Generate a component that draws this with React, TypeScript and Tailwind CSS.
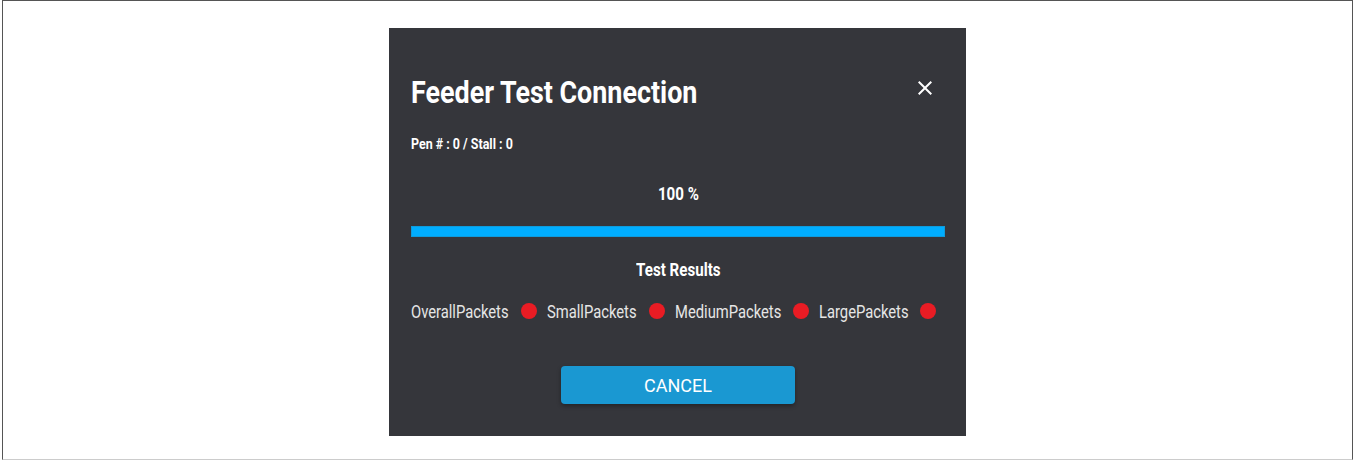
import React from "react";

const font = { fontFamily: "Roboto, 'Noto Sans', sans-serif" };

function CloseIcon() {
  return (
    <svg width="24" height="24" viewBox="0 0 24 24" fill="#ffffff" aria-hidden="true">
      <path d="M19 6.41 17.59 5 12 10.59 6.41 5 5 6.41 10.59 12 5 17.59 6.41 19 12 13.41 17.59 19 19 17.59 13.41 12z" />
    </svg>
  );
}

// label + the width its narrowed text occupies in the row
const packets: { name: string; width: string }[] = [
  { name: "OverallPackets", width: "w-[99px]" },
  { name: "SmallPackets", width: "w-[91px]" },
  { name: "MediumPackets", width: "w-[107px]" },
  { name: "LargePackets", width: "w-[90px]" },
];

export default function App() {
  return (
    <div className="w-[1353px] h-[460px] bg-white pl-[2px]" style={font}>
      <div className="h-full border-t border-l border-r border-[#555555] border-b border-b-[#cccccc] flex justify-center items-start pt-[27px]">
        <div className="w-[577px] h-[408px] bg-[#35363b] pl-[22px] pr-[21px] pt-[48px] flex flex-col">
          <div className="flex justify-between items-start">
            <h1 className="text-[32px] leading-none font-bold text-white">
              <span className="inline-block whitespace-nowrap origin-left scale-x-[0.84]">Feeder Test Connection</span>
            </h1>
            <button className="mr-[8px] w-[24px] h-[24px]">
              <CloseIcon />
            </button>
          </div>
          <div className="mt-[29px] h-[14px] text-[14px] leading-none font-bold text-white">
            <span className="inline-block whitespace-nowrap origin-left scale-x-[0.89]">Pen # : 0 / Stall : 0</span>
          </div>
          <div className="mt-[34px] h-[18px] text-[18px] leading-none font-bold text-white text-center">
            <span className="inline-block whitespace-nowrap origin-center scale-x-[0.84]">100 %</span>
          </div>
          <div className="mt-[23px] h-[11px] bg-[#00adfe] border border-[#0e9bdc]" />
          <div className="mt-[24px] h-[18px] text-[18px] leading-none font-bold text-white text-center">
            <span className="inline-block whitespace-nowrap origin-center scale-x-[0.84]">Test Results</span>
          </div>
          <div className="mt-[24px] flex items-start gap-[10px]">
            {packets.map((p) => (
              <div key={p.name} className="flex items-start gap-[11px]">
                <span className={`${p.width} h-[18px] text-[18px] leading-none text-[#e6e6e6]`}>
                  <span className="inline-block whitespace-nowrap origin-left scale-x-[0.82]">{p.name}</span>
                </span>
                <span className="w-[16px] h-[16px] rounded-full bg-[#e91c24]" />
              </div>
            ))}
          </div>
          <button className="mt-[45px] self-center w-[234px] h-[38px] rounded-[4px] bg-[#1a98d2] text-white text-[18px] shadow-[0_2px_4px_rgba(0,0,0,0.35)]">
            CANCEL
          </button>
        </div>
      </div>
    </div>
  );
}
